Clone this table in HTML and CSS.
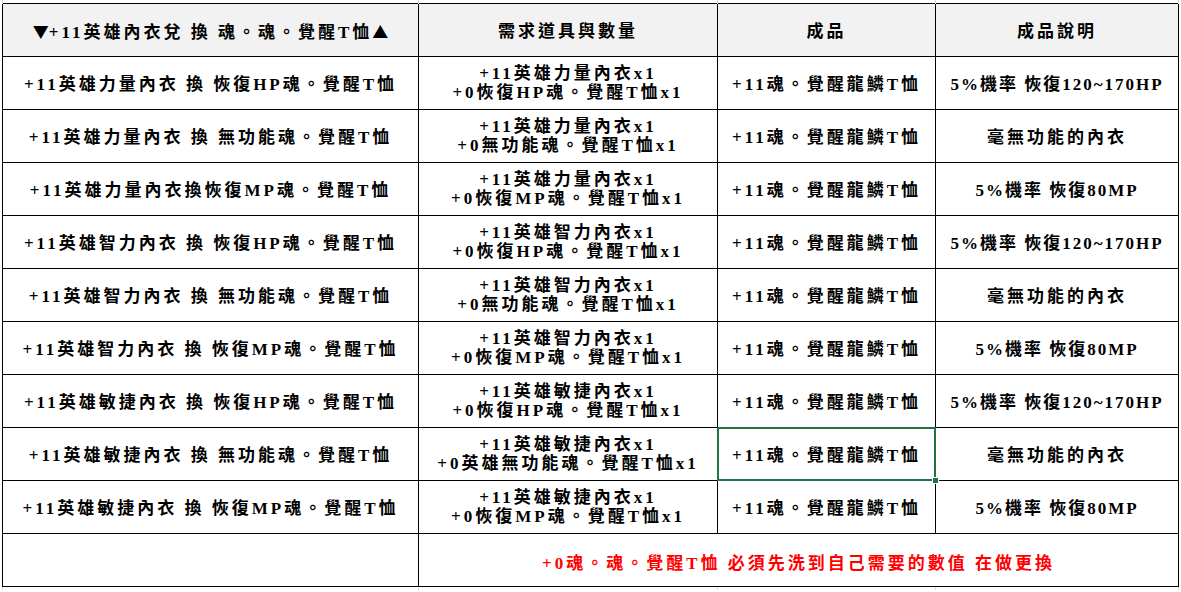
FILE: index.html
```html
<!DOCTYPE html>
<html lang="zh-Hant">
<head>
<meta charset="utf-8">
<title>+11英雄內衣兌換 魂。魂。覺醒T恤</title>
<link rel="stylesheet" href="styles.css">
</head>
<body>
<div class="sheet">
<table class="grid">
  <colgroup>
    <col class="c1"><col class="c2"><col class="c3"><col class="c4">
  </colgroup>
  <tbody>
    <tr class="ghost"><td></td><td></td><td></td><td></td></tr>
    <tr class="head">
      <th><span class="tri">▼</span>+11英雄內衣兌 換 魂。魂。覺醒T恤<span class="tri">▲</span></th>
      <th>需求道具與數量</th>
      <th>成品</th>
      <th>成品說明</th>
    </tr>
    <tr>
      <td>+11英雄力量內衣 換 恢復HP魂。覺醒T恤</td>
      <td class="req">+11英雄力量內衣x1<br>+0恢復HP魂。覺醒T恤x1</td>
      <td>+11魂。覺醒龍鱗T恤</td>
      <td class="rate">5%機率 恢復120~170HP</td>
    </tr>
    <tr>
      <td>+11英雄力量內衣 換 無功能魂。覺醒T恤</td>
      <td class="req">+11英雄力量內衣x1<br>+0無功能魂。覺醒T恤x1</td>
      <td>+11魂。覺醒龍鱗T恤</td>
      <td>毫無功能的內衣</td>
    </tr>
    <tr>
      <td>+11英雄力量內衣換恢復MP魂。覺醒T恤</td>
      <td class="req">+11英雄力量內衣x1<br>+0恢復MP魂。覺醒T恤x1</td>
      <td>+11魂。覺醒龍鱗T恤</td>
      <td class="rate">5%機率 恢復80MP</td>
    </tr>
    <tr>
      <td>+11英雄智力內衣 換 恢復HP魂。覺醒T恤</td>
      <td class="req">+11英雄智力內衣x1<br>+0恢復HP魂。覺醒T恤x1</td>
      <td>+11魂。覺醒龍鱗T恤</td>
      <td class="rate">5%機率 恢復120~170HP</td>
    </tr>
    <tr>
      <td>+11英雄智力內衣 換 無功能魂。覺醒T恤</td>
      <td class="req">+11英雄智力內衣x1<br>+0無功能魂。覺醒T恤x1</td>
      <td>+11魂。覺醒龍鱗T恤</td>
      <td>毫無功能的內衣</td>
    </tr>
    <tr>
      <td>+11英雄智力內衣 換 恢復MP魂。覺醒T恤</td>
      <td class="req">+11英雄智力內衣x1<br>+0恢復MP魂。覺醒T恤x1</td>
      <td>+11魂。覺醒龍鱗T恤</td>
      <td class="rate">5%機率 恢復80MP</td>
    </tr>
    <tr>
      <td>+11英雄敏捷內衣 換 恢復HP魂。覺醒T恤</td>
      <td class="req">+11英雄敏捷內衣x1<br>+0恢復HP魂。覺醒T恤x1</td>
      <td>+11魂。覺醒龍鱗T恤</td>
      <td class="rate">5%機率 恢復120~170HP</td>
    </tr>
    <tr>
      <td>+11英雄敏捷內衣 換 無功能魂。覺醒T恤</td>
      <td class="req">+11英雄敏捷內衣x1<br>+0英雄無功能魂。覺醒T恤x1</td>
      <td class="selected">+11魂。覺醒龍鱗T恤</td>
      <td>毫無功能的內衣</td>
    </tr>
    <tr>
      <td>+11英雄敏捷內衣 換 恢復MP魂。覺醒T恤</td>
      <td class="req">+11英雄敏捷內衣x1<br>+0恢復MP魂。覺醒T恤x1</td>
      <td>+11魂。覺醒龍鱗T恤</td>
      <td class="rate">5%機率 恢復80MP</td>
    </tr>
    <tr>
      <td></td>
      <td colspan="3" class="note">+0魂。魂。覺醒T恤 必須先洗到自己需要的數值 在做更換</td>
    </tr>
    <tr class="ghost"><td></td><td></td><td></td><td></td></tr>
  </tbody>
</table>
</div>
</body>
</html>
```

FILE: styles.css
```css
html, body {
  margin: 0;
  padding: 0;
  background: #ffffff;
}

body {
  font-family: "Liberation Serif", "Noto Sans CJK TC", serif;
  font-weight: 700;
  font-size: 17px;
  color: #000000;
  overflow: hidden;
}

.sheet {
  padding-left: 2px;
}

.grid {
  border-collapse: collapse;
  table-layout: fixed;
  width: 1176px;
}

.c1 { width: 416px; }
.c2 { width: 299px; }
.c3 { width: 218px; }
.c4 { width: 243px; }

.grid th,
.grid td {
  border: 1px solid #000000;
  padding: 3px 0 0 0;
  height: 49px;
  text-align: center;
  vertical-align: middle;
  white-space: nowrap;
  letter-spacing: 3px;
  line-height: 19px;
  font-weight: 700;
}

.head th {
  background: #f2f2f2;
}

.tri {
  font-family: "Noto Sans CJK TC", sans-serif;
  letter-spacing: 0;
  font-size: 16px;
}

.grid td.req {
  padding-top: 0;
  height: 52px;
}

.grid td.rate {
  letter-spacing: 2px;
}

.grid .ghost td {
  height: 3px;
  padding: 0;
  border-top: none;
  border-bottom: none;
  border-left: 1px solid #dadada;
  border-right: 1px solid #dadada;
}

.grid td.note {
  color: #ff0000;
  padding-top: 6px;
  height: 46px;
}

.grid td.selected {
  position: relative;
}

.grid td.selected::after {
  content: "";
  position: absolute;
  left: -1px;
  top: -1px;
  right: -1px;
  bottom: -1px;
  border: 2px solid #217346;
}

.grid td.selected::before {
  content: "";
  position: absolute;
  right: -4px;
  bottom: -4px;
  width: 5px;
  height: 5px;
  background: #217346;
  border: 1px solid #ffffff;
  z-index: 1;
}
```
